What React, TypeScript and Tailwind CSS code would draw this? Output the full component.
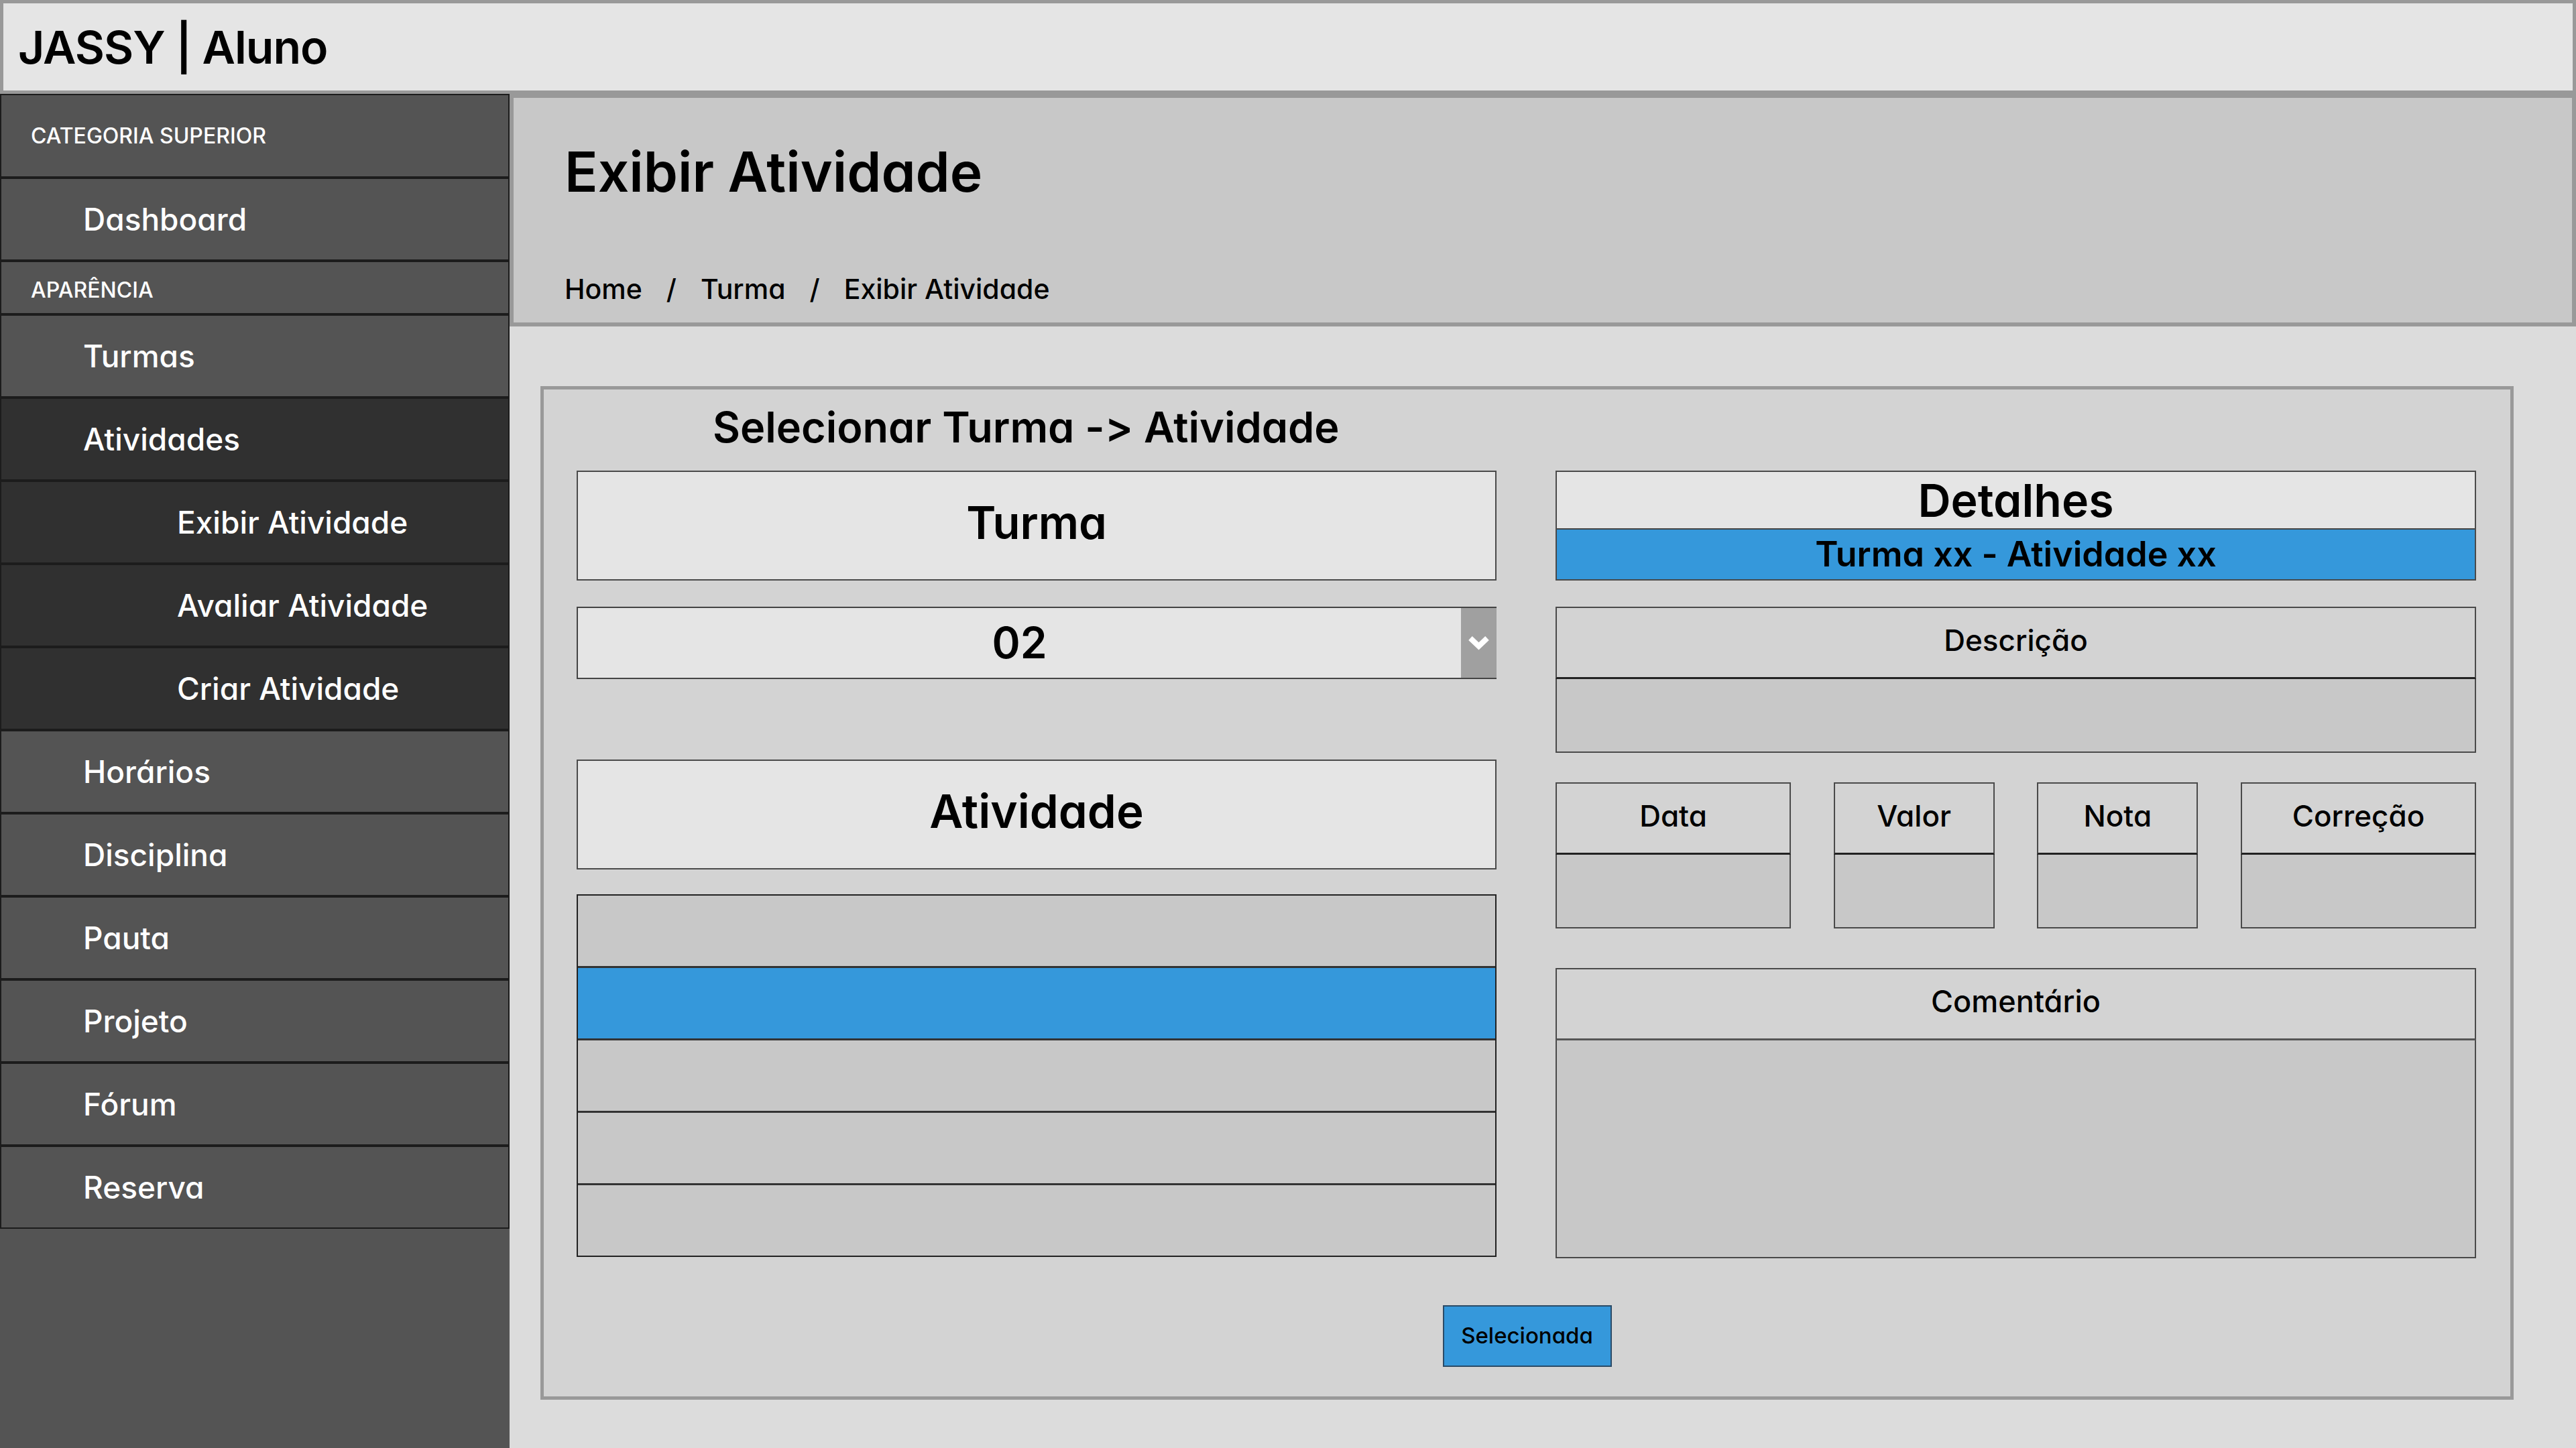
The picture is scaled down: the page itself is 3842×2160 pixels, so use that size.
import { ReactNode } from 'react';

const menu = [
  { label: 'CATEGORIA SUPERIOR', kind: 'cat', h: 'h-[125px]' },
  { label: 'Dashboard', kind: 'item' },
  { label: 'APARÊNCIA', kind: 'cat', h: 'h-[80px] pt-[8px]' },
  { label: 'Turmas', kind: 'item' },
  { label: 'Atividades', kind: 'active' },
  { label: 'Exibir Atividade', kind: 'sub' },
  { label: 'Avaliar Atividade', kind: 'sub' },
  { label: 'Criar Atividade', kind: 'sub' },
  { label: 'Horários', kind: 'item' },
  { label: 'Disciplina', kind: 'item' },
  { label: 'Pauta', kind: 'item' },
  { label: 'Projeto', kind: 'item' },
  { label: 'Fórum', kind: 'item' },
  { label: 'Reserva', kind: 'item' },
];

function Sidebar() {
  return (
    <aside className="w-[760px] shrink-0 bg-[#545454] flex flex-col">
      {menu.map((m) => {
        if (m.kind === 'cat') {
          return (
            <div
              key={m.label}
              className={`${m.h} flex items-center pl-[44px] border-2 border-[#1c1c1c] text-white text-[32px] font-medium`}
            >
              {m.label}
            </div>
          );
        }
        const bg = m.kind === 'item' ? 'bg-[#545454]' : 'bg-[#303030]';
        const pad = m.kind === 'sub' ? 'pl-[262px]' : 'pl-[122px]';
        return (
          <div
            key={m.label}
            className={`h-[124px] flex items-center border-2 border-[#1c1c1c] ${bg} ${pad} text-white text-[46px] font-medium`}
          >
            {m.label}
          </div>
        );
      })}
    </aside>
  );
}

function Box({ children, className = '' }: { children?: ReactNode; className?: string }) {
  return (
    <div className={`flex items-center justify-center border-2 border-[#4a4a4a] text-black ${className}`}>
      {children}
    </div>
  );
}

function Field({ label, className = '' }: { label: string; className?: string }) {
  return (
    <div className={`flex flex-col ${className}`}>
      <Box className="h-[108px] pb-[8px] bg-[#d3d3d3] text-[44px] font-medium border-b-[3px] border-b-[#222]">{label}</Box>
      <div className="h-[110px] bg-[#c8c8c8] border-2 border-t-0 border-[#4a4a4a]" />
    </div>
  );
}

export default function App() {
  return (
    <div className="w-[3842px] h-[2160px] flex flex-col bg-[#dcdcdc] font-['Inter',sans-serif] [font-feature-settings:'cv11','calt'_0] overflow-hidden">
      <header className="h-[140px] shrink-0 border-[5px] border-[#999] bg-[#e5e5e5] flex items-center pl-[22px]">
        <h1 className="text-[68px] font-semibold text-black leading-none tracking-[-1px]">JASSY | Aluno</h1>
      </header>

      <div className="flex flex-1">
        <Sidebar />

        <main className="flex-1 flex flex-col">
          <section className="h-[347px] bg-[#c8c8c8] border-[6px] border-[#999] pl-[76px] pt-[70px]">
            <h2 className="text-[82px] font-semibold text-black leading-none">Exibir Atividade</h2>
            <nav className="mt-[113px] flex items-center gap-[36px] text-[41px] font-medium text-black leading-none">
              <span>Home</span>
              <span>/</span>
              <span>Turma</span>
              <span>/</span>
              <span>Exibir Atividade</span>
            </nav>
          </section>

          <div className="ml-[46px] mt-[89px] w-[2943px] h-[1512px] border-[5px] border-[#999] bg-[#d3d3d3] flex flex-col">
            <h3 className="ml-[252px] mt-[25px] text-[63px] font-semibold text-black leading-none">
              Selecionar Turma -&gt; Atividade
            </h3>

            <div className="mt-[33px] ml-[49px] flex gap-[88px]">
              {/* coluna esquerda */}
              <div className="w-[1372px] flex flex-col">
                <Box className="h-[164px] pb-[8px] bg-[#e5e5e5] text-[67px] font-semibold">Turma</Box>
                <div className="mt-[39px] h-[108px] flex border-y-2 border-[#444] border-l-2">
                  <div className="flex-1 bg-[#e5e5e5] flex items-center justify-center text-[64px] font-semibold">02</div>
                  <div className="w-[53px] bg-[#a0a0a0] flex items-center justify-center">
                    <svg width="33" height="22" viewBox="0 0 33 22">
                      <polyline points="4,4 16.5,16 29,4" fill="none" stroke="white" strokeWidth="8" />
                    </svg>
                  </div>
                </div>
                <Box className="mt-[120px] h-[164px] pb-[8px] bg-[#e5e5e5] text-[69px] font-semibold">Atividade</Box>
                <div className="mt-[37px] h-[541px] flex flex-col border-2 border-[#222]">
                  {[0, 1, 2, 3, 4].map((i) => (
                    <div
                      key={i}
                      className={`flex-1 ${i === 1 ? 'bg-[#3598db]' : 'bg-[#c8c8c8]'} ${i < 4 ? 'border-b-[3px] border-[#333]' : ''}`}
                    />
                  ))}
                </div>
              </div>

              {/* coluna direita */}
              <div className="w-[1373px] flex flex-col">
                <div className="flex flex-col border-2 border-[#4a4a4a]">
                  <div className="h-[86px] bg-[#e5e5e5] flex items-center justify-center text-[68px] font-semibold border-b-2 border-[#444]">
                    Detalhes
                  </div>
                  <div className="h-[74px] bg-[#3598db] flex items-center justify-center text-[52px] font-semibold">
                    Turma xx - Atividade xx
                  </div>
                </div>

                <Field label="Descrição" className="mt-[39px]" />

                <div className="mt-[44px] flex justify-between">
                  <Field label="Data" className="w-[351px]" />
                  <Field label="Valor" className="w-[240px]" />
                  <Field label="Nota" className="w-[240px]" />
                  <Field label="Correção" className="w-[351px]" />
                </div>

                <div className="mt-[59px] flex flex-col">
                  <Box className="h-[108px] pb-[8px] bg-[#d3d3d3] text-[45px] font-medium border-b-[3px] border-b-[#555]">Comentário</Box>
                  <div className="h-[325px] bg-[#c8c8c8] border-2 border-t-0 border-[#4a4a4a]" />
                </div>
              </div>
            </div>

            <div className="mt-[70px] flex justify-center">
              <button className="w-[252px] h-[92px] bg-[#3598db] border-2 border-[#2a4a66] text-black text-[33px] font-medium">
                Selecionada
              </button>
            </div>
          </div>
        </main>
      </div>
    </div>
  );
}
